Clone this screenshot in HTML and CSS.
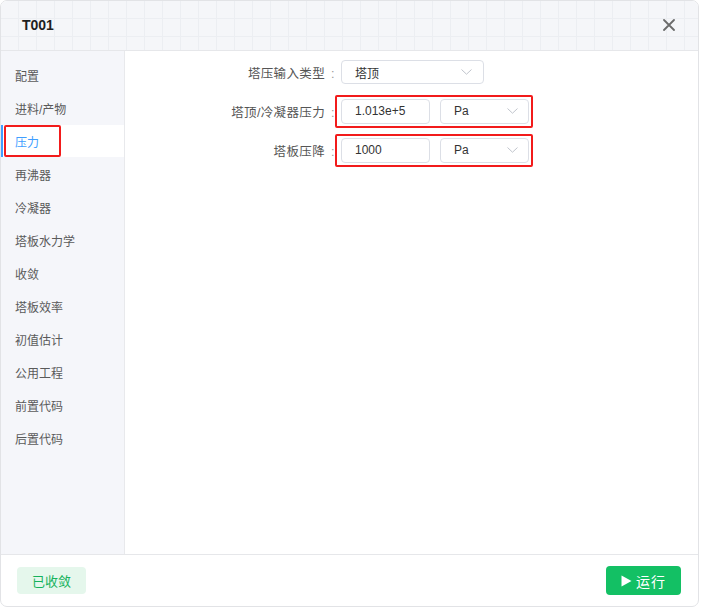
FILE: index.html
```html
<!DOCTYPE html>
<html lang="zh-CN">
<head>
<meta charset="utf-8">
<title>T001</title>
<link rel="stylesheet" href="styles.css">
</head>
<body>
<div class="dialog">
  <header class="dlg-header">
    <span class="dlg-title">T001</span>
    <button class="dlg-close" aria-label="关闭">
      <svg width="12" height="12" viewBox="0 0 12 12"><path d="M1 1L11 11M11 1L1 11" stroke="#6b6b6b" stroke-width="1.8" stroke-linecap="round"/></svg>
    </button>
  </header>
  <div class="dlg-body">
    <nav class="side">
      <div class="side-item">配置</div>
      <div class="side-item">进料/产物</div>
      <div class="side-item active">压力</div>
      <div class="side-item">再沸器</div>
      <div class="side-item">冷凝器</div>
      <div class="side-item">塔板水力学</div>
      <div class="side-item">收敛</div>
      <div class="side-item">塔板效率</div>
      <div class="side-item">初值估计</div>
      <div class="side-item">公用工程</div>
      <div class="side-item">前置代码</div>
      <div class="side-item">后置代码</div>
    </nav>
    <main class="content">
      <div class="row">
        <label class="label">塔压输入类型</label>
        <div class="ctrls">
          <div class="select wide"><span>塔顶</span><svg class="chev" width="11" height="6" viewBox="0 0 11 6"><path d="M0.5 0.5L5.5 5.2L10.5 0.5" fill="none" stroke="#c0c4cc" stroke-width="1"/></svg></div>
        </div>
      </div>
      <div class="row">
        <label class="label">塔顶/冷凝器压力</label>
        <div class="ctrls marked">
          <div class="input">1.013e+5</div>
          <div class="select"><span>Pa</span><svg class="chev" width="11" height="6" viewBox="0 0 11 6"><path d="M0.5 0.5L5.5 5.2L10.5 0.5" fill="none" stroke="#c0c4cc" stroke-width="1"/></svg></div>
        </div>
      </div>
      <div class="row">
        <label class="label">塔板压降</label>
        <div class="ctrls marked">
          <div class="input">1000</div>
          <div class="select"><span>Pa</span><svg class="chev" width="11" height="6" viewBox="0 0 11 6"><path d="M0.5 0.5L5.5 5.2L10.5 0.5" fill="none" stroke="#c0c4cc" stroke-width="1"/></svg></div>
        </div>
      </div>
    </main>
  </div>
  <footer class="dlg-footer">
    <span class="status">已收敛</span>
    <button class="run"><svg width="11" height="12" viewBox="0 0 11 12"><path d="M0.5 0.5L10.5 6L0.5 11.5Z" fill="#fff"/></svg>运行</button>
  </footer>
</div>
</body>
</html>
```
FILE: styles.css
```css
*, *::before, *::after { box-sizing: border-box; }
html, body {
  margin: 0;
  padding: 0;
  background: #ffffff;
}
body {
  font-family: "Liberation Sans", "Noto Sans CJK SC", sans-serif;
  font-size: 12px;
  color: #333;
}
.dialog {
  width: 699px;
  height: 607px;
  border: 1px solid #e2e3e6;
  border-radius: 7px;
  overflow: hidden;
  display: flex;
  flex-direction: column;
  background: #fff;
}
.dlg-header {
  height: 50px;
  flex: none;
  display: flex;
  align-items: center;
  justify-content: space-between;
  padding: 0 22px 0 21px;
  border-bottom: 1px solid #e6e7ea;
  background-color: #f5f6f9;
  background-image:
    linear-gradient(to right, #eceef2 1px, transparent 1px),
    linear-gradient(to bottom, #eceef2 1px, transparent 1px);
  background-size: 18px 18px;
  background-position: 17px -1px;
}
.dlg-title {
  font-size: 14px;
  font-weight: bold;
  color: #1f1f1f;
  margin-top: -1px;
}
.dlg-close {
  border: 0;
  background: none;
  padding: 0;
  width: 14px;
  height: 14px;
  display: flex;
  align-items: center;
  justify-content: center;
  margin-top: -1px;
}
.dlg-body {
  flex: 1;
  display: flex;
  min-height: 0;
}
.side {
  width: 124px;
  flex: none;
  background: #f5f6fa;
  border-right: 1px solid #e8e9ec;
  padding-top: 8px;
}
.side-item {
  height: 33px;
  display: flex;
  align-items: center;
  padding-left: 14px;
  color: #5a5a5a;
  font-size: 12px;
}
.side-item.active {
  position: relative;
  background: #fff;
  color: #409eff;
  border-left: 2px solid #409eff;
  padding-left: 12px;
  height: 32px;
  margin-bottom: 1px;
}
.side-item.active::after {
  content: "";
  position: absolute;
  left: 1px;
  top: 0;
  width: 57px;
  height: 32px;
  border: 2px solid #f21b1b;
  border-radius: 2px;
}
.content {
  flex: 1;
  padding-top: 9px;
  display: flex;
  flex-direction: column;
  gap: 15px;
}
.row {
  display: flex;
  align-items: center;
  height: 24px;
}
.label {
  width: 216px;
  text-align: right;
  color: #555;
  font-size: 12.5px;
  letter-spacing: 0.35px;
}
.label::after {
  content: ":";
  display: inline-block;
  width: 16px;
  text-align: center;
  color: #999;
}
.ctrls {
  display: flex;
  gap: 10px;
  position: relative;
}
.marked::after {
  content: "";
  position: absolute;
  left: -6px;
  right: -4px;
  top: -4px;
  bottom: -4px;
  border: 2px solid #f21b1b;
  border-radius: 2px;
}
.input, .select {
  height: 25px;
  width: 89px;
  border: 1px solid #dcdfe6;
  border-radius: 4px;
  padding: 0 13px;
  display: flex;
  align-items: center;
  color: #333;
  background: #fff;
  font-size: 12px;
}
.select {
  justify-content: space-between;
  padding-right: 10px;
}
.select.wide { width: 143px; height: 24px; padding-right: 11px; }
.chev { flex: none; }
.dlg-footer {
  height: 52px;
  flex: none;
  border-top: 1px solid #e6e7ea;
  display: flex;
  align-items: center;
  justify-content: space-between;
  padding: 0 16px 0 16px;
}
.status {
  width: 69px;
  height: 27px;
  border-radius: 4px;
  background: #e5f7ec;
  color: #16b25c;
  display: flex;
  align-items: center;
  justify-content: center;
  font-size: 13px;
}
.run {
  width: 75px;
  height: 29px;
  border: 0;
  border-radius: 4px;
  background: #13c064;
  color: #fff;
  font-family: inherit;
  font-size: 14px;
  display: flex;
  align-items: center;
  justify-content: center;
  gap: 4px;
  letter-spacing: 1px;
  padding: 0;
  margin-right: 1px;
}
```
